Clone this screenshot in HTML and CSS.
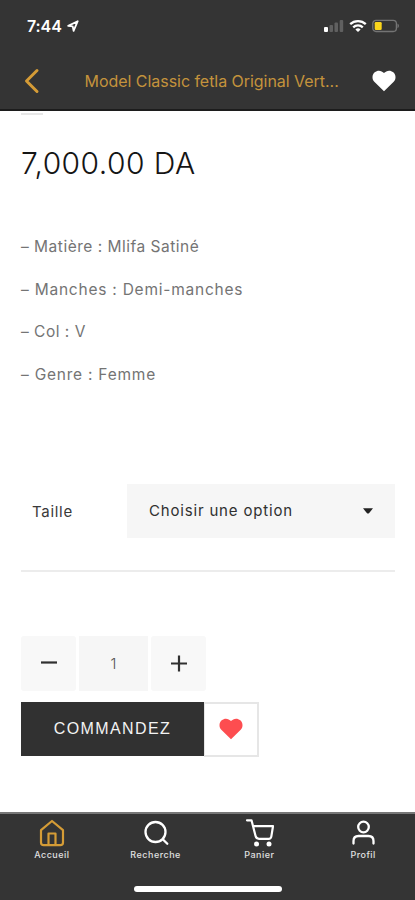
FILE: index.html
```html
<!DOCTYPE html>
<html lang="fr">
<head>
<meta charset="utf-8">
<meta name="viewport" content="width=device-width, initial-scale=1">
<title>Model Classic fetla</title>
<link rel="stylesheet" href="styles.css">
</head>
<body>
<div class="app">
  <header class="header">
    <div class="status">
      <span class="time">7:44</span>
      <svg class="location" width="12" height="12" viewBox="0 0 12 12"><path d="M1.2 5.9 10.7 1.2 6.6 10.8 5.7 6.4Z" fill="none" stroke="#fff" stroke-width="1.8" stroke-linejoin="round"/></svg>
      <svg class="signal" width="20" height="14" viewBox="0 0 20 14"><rect x="0" y="8" width="4" height="5" rx="1" fill="#fff"/><g fill="#606060"><rect x="5.5" y="6" width="3.5" height="7" rx="1"/><rect x="10.5" y="3.5" width="3.5" height="9.5" rx="1"/><rect x="15.7" y="1" width="3.5" height="12" rx="1"/></g></svg>
      <svg class="wifi" width="18" height="14" viewBox="0 0 18 14"><g fill="none" stroke="#fff" stroke-width="2.3"><path d="M1.2 5.2a11.2 11.2 0 0 1 15.6 0"/><path d="M4.2 8.3a6.9 6.9 0 0 1 9.6 0"/></g><path d="M6.4 10.4a3.9 3.9 0 0 1 5.2 0L9 13.1Z" fill="#fff"/></svg>
      <svg class="battery" width="28" height="14" viewBox="0 0 28 14"><rect x=".8" y="1.3" width="23.6" height="11.2" rx="3.2" fill="none" stroke="#747474" stroke-width="1.3"/><rect x="2.7" y="3" width="7" height="8" rx="1.3" fill="#fbd51b"/><path d="M25.5 4.6c1.9.8 1.9 3.8 0 4.6Z" fill="#777"/></svg>
    </div>
    <div class="titlebar">
      <svg class="back" width="16" height="26" viewBox="0 0 16 26"><path d="M13 2.5 2.5 13 13 23.5" fill="none" stroke="#d59c36" stroke-width="3" stroke-linecap="round" stroke-linejoin="round"/></svg>
      <h1 class="title">Model Classic fetla Original Vert...</h1>
      <svg class="fav" width="24" height="22" viewBox="0 0 24 22"><path d="M12 21.3 2.3 11.8C-.4 9 .1 4.4 2.7 2.2 5.5-.2 9.7.2 12 3.1 14.3.2 18.5-.2 21.3 2.2 23.9 4.4 24.4 9 21.7 11.8Z" fill="#fff"/></svg>
    </div>
  </header>
  <main class="content">
    <div class="remnant"></div>
    <p class="price">7,000.00 DA</p>
    <div class="details">
      <p>– Matière : Mlifa Satiné</p>
      <p class="wide">– Manches : Demi-manches</p>
      <p>– Col : V</p>
      <p class="wide">– Genre : Femme</p>
    </div>
    <div class="variation">
      <span class="label">Taille</span>
      <div class="select"><span>Choisir une option</span><svg width="10" height="6" viewBox="0 0 10 6"><path d="M0 .3h10L6.2 4.9Q5 6 3.8 4.9Z" fill="#222"/></svg></div>
    </div>
    <div class="quantity">
      <button class="step" aria-label="Moins"><svg width="18" height="18" viewBox="0 0 18 18"><path d="M1 8.5h16" stroke="#303030" stroke-width="2.2"/></svg></button>
      <span class="value">1</span>
      <button class="step" aria-label="Plus"><svg width="18" height="18" viewBox="0 0 18 18"><path d="M1 9.500h16M9 1.500v16" stroke="#303030" stroke-width="2.2"/></svg></button>
    </div>
    <div class="actions">
      <button class="order">COMMANDEZ</button>
      <button class="wish" aria-label="Favori"><svg width="24" height="22" viewBox="0 0 24 22"><path d="M12 21.3 2.3 11.8C-.4 9 .1 4.4 2.7 2.2 5.5-.2 9.7.2 12 3.1 14.3.2 18.5-.2 21.3 2.2 23.9 4.4 24.4 9 21.7 11.8Z" fill="#fd4d50"/></svg></button>
    </div>
  </main>
  <nav class="tabs">
    <div class="items">
      <a class="tab active"><svg width="26" height="28" viewBox="0 0 26 28"><g fill="none" stroke="#d59c36" stroke-width="2.2" stroke-linejoin="round"><path d="M2 11.2 13 2l11 9.2v12.3a2.700 2.700 0 0 1-2.700 2.700H4.700A2.700 2.700 0 0 1 2 23.500Z"/><path d="M9.500 26V14.500h7V26"/></g></svg><span>Accueil</span></a>
      <a class="tab"><svg width="26" height="28" viewBox="0 0 26 28"><g fill="none" stroke="#fff" stroke-width="2.3" stroke-linecap="round"><circle cx="12.500" cy="13" r="10"/><path d="m20 20.500 4.300 4.300"/></g></svg><span>Recherche</span></a>
      <a class="tab"><svg width="30" height="28" viewBox="0 0 30 28"><g fill="none" stroke="#fff" stroke-width="2.2" stroke-linecap="round" stroke-linejoin="round"><path d="M3 1.300h4.500l4 15.500q.7 3 3.500 3h9.700q2.200 0 2.600-2.200L29 7.200H9.200"/></g><g fill="#fff"><circle cx="12.500" cy="25" r="2.500"/><circle cx="25" cy="25" r="2.500"/></g></svg><span>Panier</span></a>
      <a class="tab"><svg width="26" height="28" viewBox="0 0 26 28"><g fill="none" stroke="#fff" stroke-width="2.3" stroke-linecap="round"><circle cx="13.500" cy="8" r="5.300"/><path d="M3.500 24.500v-2.500q0-5 5-5h10q5 0 5 5V24.500"/></g></svg><span>Profil</span></a>
    </div>
    <div class="home"></div>
  </nav>
</div>
</body>
</html>
```

FILE: styles.css
```css
* { box-sizing: border-box; }
body { margin: 0; background: #fff; font-family: Inter, "Liberation Sans", sans-serif; }
p, h1 { margin: 0; font-weight: 400; }
svg { display: block; flex: none; }
button { border: 0; padding: 0; font: inherit; }
.app { width: 415px; height: 900px; display: flex; flex-direction: column; overflow: hidden; }
.header { height: 111px; flex: none; background: #343434; border-bottom: 2px solid #1c1c1c; }
.status { height: 52px; display: flex; align-items: center; padding: 0 15px 0 27px; }
.time { color: #fff; font-size: 16px; font-weight: 600; width: 36px; letter-spacing: -.1px; }
.location { margin-left: 4px; }
.signal { margin-left: auto; }
.wifi { margin-left: 5px; }
.battery { margin-left: 5px; }
.titlebar { height: 57px; display: flex; align-items: center; padding: 0 19px 0 24px; }
.title { color: #c4933c; font-size: 16px; line-height: 24px; letter-spacing: -.04px; width: 256px; margin-left: 44.5px; white-space: nowrap; }
.fav { margin-left: auto; }
.content { flex: 1; padding: 0 20px 0 21px; }
.remnant { width: 22px; height: 2px; margin-top: 2px; background: #e7e7e7; }
.price { margin-top: 28px; height: 40px; line-height: 40px; font-size: 30px; font-weight: 300; letter-spacing: .45px; color: #151515; white-space: nowrap; }
.details { margin-top: 43px; color: #747474; font-size: 15.5px; font-weight: 300; line-height: 42.67px; letter-spacing: .5px; white-space: nowrap; }
.details .wide { letter-spacing: .77px; }
.variation { margin-top: 87px; height: 88px; display: flex; align-items: flex-start; border-bottom: 2px solid #ececec; }
.label { width: 106px; padding-left: 11px; line-height: 55px; font-size: 15px; letter-spacing: .7px; color: #3a3a3a; }
.select { flex: 1; height: 54px; display: flex; align-items: center; justify-content: space-between; padding: 0 22px; background: #f6f6f6; font-size: 15px; letter-spacing: .82px; color: #303030; }
.quantity { margin-top: 64px; display: flex; gap: 3px; width: 185px; height: 55px; }
.step { width: 55px; background: #f8f8f8; border-radius: 3px; display: flex; align-items: center; justify-content: center; }
.value { flex: 1; background: #f6f6f6; text-align: center; line-height: 55px; font-size: 15px; font-weight: 300; color: #555; }
.actions { margin-top: 11px; display: flex; }
.order { width: 183px; height: 54px; background: #313131; color: #f3f3f3; font-family: "Liberation Sans", sans-serif; font-size: 16px; letter-spacing: 1.4px; }
.wish { width: 55px; height: 55px; background: #fff; border: 2px solid #e6e6e6; border-left-width: 1px; display: flex; align-items: center; justify-content: center; }
.tabs { height: 88px; flex: none; background: #343434; border-top: 2px solid #777; }
.items { display: flex; height: 72px; padding-top: 5px; }
.tab { flex: 1; display: flex; flex-direction: column; align-items: center; color: #e0e0e0; font-size: 9px; font-weight: 500; letter-spacing: .5px; line-height: 14px; gap: 1px; }
.home { width: 148px; height: 6px; margin: 0 auto; border-radius: 3px; background: #fff; }
```
